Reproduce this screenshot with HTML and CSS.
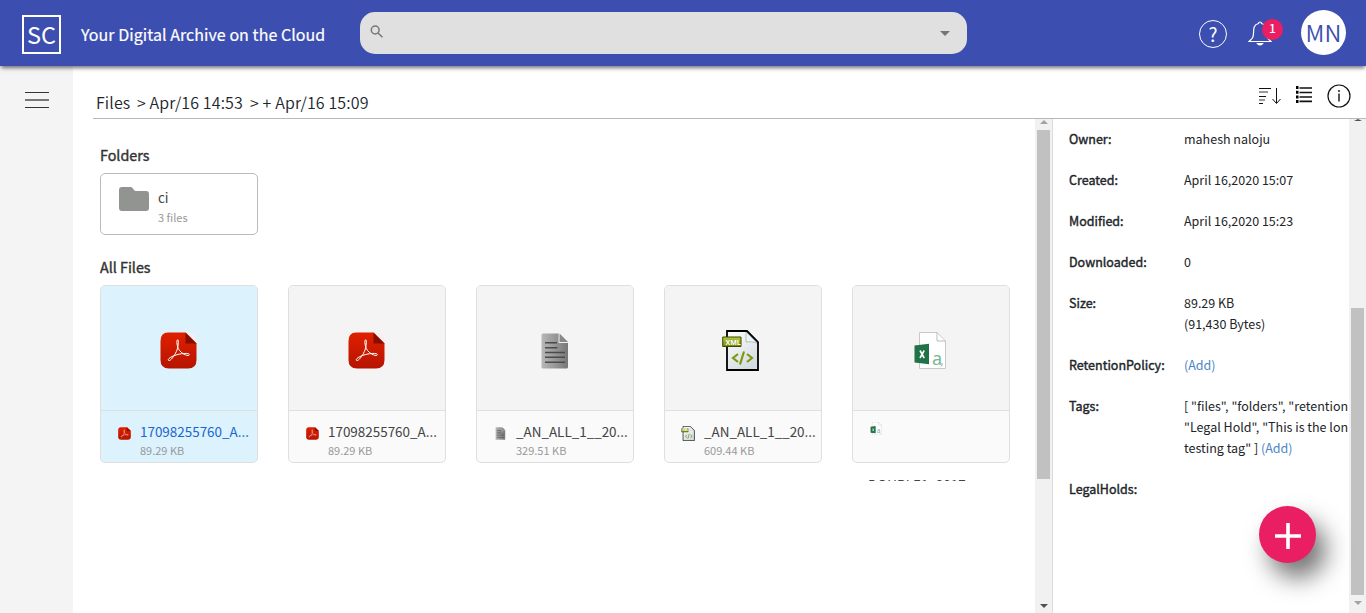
FILE: index.html
```html
<!DOCTYPE html>
<html lang="en">
<head>
<meta charset="utf-8">
<title>Digital Archive</title>
<link rel="stylesheet" href="styles.css">
</head>
<body>
<svg width="0" height="0" class="defs">
  <defs>
    <linearGradient id="red" x2="0" y2="1"><stop stop-color="#e02000"/><stop offset="1" stop-color="#b61400"/></linearGradient>
    <linearGradient id="grey"><stop stop-color="#b8b8b8"/><stop offset="1" stop-color="#777"/></linearGradient>
    <linearGradient id="paper" x2=".6" y2="1"><stop stop-color="#fff"/><stop offset="1" stop-color="#d3dce1"/></linearGradient>
    <linearGradient id="lime" x2="0" y2="1"><stop stop-color="#b9cc3c"/><stop offset="1" stop-color="#71860a"/></linearGradient>
    <symbol id="pdf" viewBox="0 0 37 37">
      <path d="M26 .5h3q7.500 1 7.500 8v3z" fill="#f9eeee"/>
      <path d="M8 .5h17.500l11 11V28q0 8.500-8.500 8.500H9Q.5 36.500.5 28V9Q.5.5 8 .5z" fill="url(#red)"/>
      <path d="M25.500.5v11h11z" fill="#850e00"/>
      <path d="M17 8.500c.3-1 1.300-1 1.300 0 .2 3-.3 6-1.300 9.500-1.500 4-5 9.500-7.500 10.500-1.500.3-1.700-1-.5-2 2-1.800 6-3.500 10-4.300 3.500-.8 7.500-1 9.500-.5 1.500.5 1 1.800-.5 1.800-3-.2-6.500-2.500-8.500-5C17.500 16 16.500 11 17 8.500z" fill="none" stroke="#fff" stroke-width="1"/>
    </symbol>
    <symbol id="txt" viewBox="0 0 28 36">
      <path d="M2 .5h16l9 9V34q0 1.500-1.500 1.500H2Q.5 35.500.5 34V2Q.5.500 2 .5z" fill="url(#grey)"/>
      <path d="M18 .5v9h9.500" fill="none" stroke="#eee"/><path d="M19 1l8 8h-8z" fill="#888"/>
      <path d="M4 9.800h12M4 14.800h12.500M4 19.500h20M4 24.200h20M4 29.200h20" stroke="#4a4a4a" stroke-width="1.500"/>
    </symbol>
    <symbol id="xml" viewBox="0 0 37 41">
      <path d="M5 1h20l11 11v28H5z" fill="url(#paper)" stroke="#000" stroke-width="1.800"/>
      <path d="M24 2v10q5-1 11 1z" fill="#eef3fa" stroke="#9aa" stroke-width=".7"/>
      <path d="M.7 7H19v9.500H.7z" fill="url(#lime)" stroke="#3d4a00" stroke-width="1"/>
      <text x="3.500" y="15" class="xml-label">XML</text>
      <path d="M16 24l-5 4 5 4M25 24l5 4-5 4M22 21.500l-4 13" fill="none" stroke="#82960f" stroke-width="2.200"/>
    </symbol>
    <symbol id="xls" viewBox="0 0 32 37">
      <path d="M5.500.5H23l8.500 8.500v27.500h-26z" fill="#fff" stroke="#c8c8c8"/>
      <path d="M23 .5V9h8.500" fill="none" stroke="#bbb"/>
      <path d="M.5 13.500L15 11.700v20.600L.5 30.500z" fill="#207346"/>
      <path d="M6 18.500l4.200 7.500M10.200 18.500L6 26" stroke="#fff" stroke-width="1.600"/>
      <text x="18" y="32.500" class="xls-a">a</text><path d="M28 31v2l-1 1.500" stroke="#78b797" fill="none"/>
    </symbol>
  </defs>
</svg>

<header class="topbar">
  <div class="logo">SC</div>
  <div class="tagline">Your Digital Archive on the Cloud</div>
  <div class="search">
    <svg class="search-icon" width="14" height="14" viewBox="0 0 14 14" fill="none" stroke="#777" stroke-width="1.500"><circle cx="5.200" cy="5" r="3.900"/><path d="M8 8l4.500 4.300"/></svg>
    <svg width="10" height="5" viewBox="0 0 10 5"><path d="M0 0h10L5 5z" fill="#757575"/></svg>
  </div>
  <div class="help">?</div>
  <div class="bell">
    <svg width="24" height="26" viewBox="0 0 24 26" fill="none" stroke="#fff" stroke-width="1.200"><path d="M10.500 2.500q0-1.500 1.500-1.500t1.500 1.500C18 3.500 18.500 7 18.500 12c0 5 1.500 5.500 4.500 8.500H1C4 17.500 5.500 17 5.500 12c0-5 .5-8.500 5-9.500z"/><path d="M9.500 22.500q2.500 3 5 0z" fill="#fff"/></svg>
    <span class="badge">1</span>
  </div>
  <div class="avatar">MN</div>
</header>

<div class="body">
  <nav class="sidebar"><div class="menu"><i></i><i></i><i></i></div></nav>
  <main class="main">
    <div class="toolbar">
      <div class="crumbs"><span class="c1">Files</span><span class="c2">&gt; Apr/16 14:53</span><span class="c3">&gt; + Apr/16 15:09</span></div>
      <svg class="sort" width="23" height="17" viewBox="0 0 23 17" fill="none" stroke="#111"><path d="M0 .5h12M0 8.500h7M0 15.500h4"/><path d="M17.500 0v15M13.500 11l4 4.500 4-4.500"/><path d="M0 4h9M0 12h6" stroke="#999" stroke-width="2"/></svg>
      <svg class="list" width="16" height="17" viewBox="0 0 16 17"><path d="M0 1.500h2.500M0 6.200h2.500M0 10.900h2.500M0 15.500h2.500" stroke="#000" stroke-width="3"/><path d="M3.500 2h12.500M3.500 6.500h12.500M3.500 11h12.500M3.500 15.400h12.500" stroke="#111" stroke-width="1.700"/></svg>
      <svg class="info" width="24" height="24" viewBox="0 0 24 24" fill="none" stroke="#111"><circle cx="12" cy="12" r="11" stroke-width="1.200"/><path d="M12 9.500v8M12 6v2" stroke-width="1.400"/></svg>
    </div>
    <div class="split">
      <section class="files">
        <h2>Folders</h2>
        <div class="folder">
          <svg width="30" height="24" viewBox="0 0 30 24"><path d="M3 0h9.500l3.500 4h11q3 0 3 3v14q0 3-3 3H3q-3 0-3-3V3q0-3 3-3z" fill="#929492"/></svg>
          <div><div class="name">ci</div><div class="size">3 files</div></div>
        </div>
        <h2 class="all">All Files</h2>
        <div class="grid">
          <article class="card selected"><div class="preview"><svg width="37" height="37"><use href="#pdf"/></svg></div><div class="meta"><svg class="mini" width="13" height="13"><use href="#pdf"/></svg><div><div class="name">17098255760_A...</div><div class="size">89.29 KB</div></div></div></article>
          <article class="card"><div class="preview"><svg width="37" height="37"><use href="#pdf"/></svg></div><div class="meta"><svg class="mini" width="13" height="13"><use href="#pdf"/></svg><div><div class="name">17098255760_A...</div><div class="size">89.29 KB</div></div></div></article>
          <article class="card"><div class="preview"><svg width="28" height="36"><use href="#txt"/></svg></div><div class="meta"><svg class="mini" width="13" height="13"><use href="#txt"/></svg><div><div class="name">_AN_ALL_1__20...</div><div class="size">329.51 KB</div></div></div></article>
          <article class="card xml"><div class="preview"><svg width="37" height="41"><use href="#xml"/></svg></div><div class="meta"><svg class="mini" width="14" height="15"><use href="#xml"/></svg><div><div class="name">_AN_ALL_1__20...</div><div class="size">609.44 KB</div></div></div></article>
          <article class="card wrapped"><div class="preview"><svg width="32" height="37"><use href="#xls"/></svg></div><div class="meta"><svg class="mini" width="12" height="13"><use href="#xls"/></svg><div class="name long">DOUBLE1_2017</div></div></article>
        </div>
      </section>
      <div class="bar mid"><i class="up"></i><b></b><i class="down"></i></div>
      <aside class="details">
        <dl>
          <dt>Owner:</dt><dd>mahesh naloju</dd>
          <dt>Created:</dt><dd>April 16,2020 15:07</dd>
          <dt>Modified:</dt><dd>April 16,2020 15:23</dd>
          <dt>Downloaded:</dt><dd>0</dd>
          <dt>Size:</dt><dd>89.29 KB<br>(91,430 Bytes)</dd>
          <dt>RetentionPolicy:</dt><dd><a>(Add)</a></dd>
          <dt>Tags:</dt><dd>[ "files", "folders", "retention<br>"Legal Hold", "This is the lon<br>testing tag" ] <a>(Add)</a></dd>
          <dt>LegalHolds:</dt><dd></dd>
        </dl>
      </aside>
      <div class="bar right"><i class="up"></i><b></b><i class="down"></i></div>
    </div>
  </main>
</div>
<button class="fab" aria-label="Add"><svg width="26" height="26" viewBox="0 0 26 26"><path d="M13 0v26M0 13h26" stroke="#fff" stroke-width="3.600"/></svg></button>
</body>
</html>
```
FILE: styles.css
```css
* { box-sizing: border-box; }
body { margin: 0; height: 613px; overflow: hidden; display: flex; flex-direction: column; background: #fff; color: #212529; font-family: "Noto Sans CJK JP", "Noto Sans CJK SC", "Noto Sans", sans-serif; font-size: 13px; }
.defs { position: absolute; }
.topbar { height: 66px; flex: none; display: flex; align-items: flex-start; background: #3c4eaf; color: #fff; box-shadow: 0 3px 4px -1px rgba(0,0,0,.55); z-index: 2; }
.logo { width: 39px; height: 39px; margin: 15px 0 0 22px; border: 2px solid #fff; font-size: 23.500px; line-height: 34px; display: flex; justify-content: center; }
.tagline { width: 299px; padding-left: 20px; margin-top: 22px; font-size: 16px; line-height: 24px; letter-spacing: .05px; white-space: nowrap; -webkit-text-stroke: .2px; }
.search { width: 607px; height: 42px; margin-top: 12px; border-radius: 15px; background: #e0e0e0; display: flex; justify-content: space-between; align-items: center; padding: 0 17px 0 10px; }
.search-icon { margin-bottom: 3px; }
.help { width: 28px; height: 28px; margin: 20px 0 0 232px; border: 1.3px solid #fff; border-radius: 50%; text-align: center; font-size: 19px; line-height: 25px; }
.bell { position: relative; margin: 21px 0 0 21px; width: 24px; }
.badge { position: absolute; left: 14px; top: -2px; width: 21px; height: 21px; border-radius: 50%; background: #e91e63; font-size: 12px; font-weight: 500; line-height: 17px; text-align: center; }
.avatar { width: 45px; height: 45px; margin: 10px 0 0 29px; border-radius: 50%; background: #fff; color: #3c4eaf; font-size: 23.500px; font-weight: 350; line-height: 45px; text-align: center; }
.body { display: flex; flex: 1; min-height: 0; }
.sidebar { width: 73px; background: #f4f4f4; padding: 26px 0 0 25px; }
.menu { width: 24px; height: 16px; display: flex; flex-direction: column; justify-content: space-between; }
.menu i { height: 1px; background: #333; }
.menu i:nth-child(2) { height: 2px; background: #777; }
.main { flex: 1; min-width: 0; padding-left: 20px; display: flex; flex-direction: column; }
.toolbar { height: 53px; flex: none; border-bottom: 1px solid #b8b8b8; display: flex; align-items: flex-start; }
.crumbs { display: flex; width: 1166px; padding: 24px 0 0 3px; font-size: 16px; line-height: 24px; letter-spacing: .13px; white-space: pre; font-weight: 350; }
.c1 { width: 41px; } .c2 { width: 113px; }
.sort { margin-top: 22px; }
.list { margin: 20px 0 0 14px; }
.info { margin: 18px 0 0 15px; }
.split { display: flex; flex: 1; min-height: 0; }
.files { width: 942px; padding: 26px 0 0 7px; }
h2 { margin: 0; font-size: 14.300px; line-height: 20px; font-weight: 400; color: #333; -webkit-text-stroke: .4px; }
.folder { width: 158px; height: 62px; margin-top: 8px; border: 1px solid #bbb; border-radius: 5px; display: flex; gap: 9px; padding: 13px 0 0 18px; }
.name { font-size: 13.450px; line-height: 18px; height: 20px; color: #444; white-space: nowrap; }
.folder .name { padding-top: 1px; height: 22px; }
.size { font-size: 11px; line-height: 17px; color: #999; white-space: nowrap; }
.all { margin-top: 22px; }
.grid { display: flex; gap: 30px; height: 204px; padding-top: 8px; overflow: hidden; }
.card { flex: none; width: 158px; height: 178px; border: 1px solid #dfdfdf; border-radius: 5px; background: #fafafa; }
.preview { height: 125px; border-bottom: 1px solid #dfdfdf; background: #f4f4f4; border-radius: 4px 4px 0 0; display: flex; align-items: center; justify-content: center; padding: 5px 1px 0 0; }
.xml .preview { padding-right: 5px; }
.wrapped .preview { padding-right: 2px; }
.selected, .selected .preview { background: #dcf2fd; }
.selected .name { color: #1a66d0; }
.meta { display: flex; gap: 9px; padding: 11px 0 0 17px; }
.mini { flex: none; margin-top: 5px; }
.xml .meta { padding-left: 16px; }
.xml .mini { margin-top: 4px; }
.wrapped .meta { flex-direction: column; gap: 0; }
.wrapped .mini { margin: 0; }
.long { margin: 40px 0 0 -2px; }
.xml-label { font: 700 7px "Open Sans", sans-serif; fill: #fff; }
.xls-a { font: 18px "Noto Sans", sans-serif; fill: #78b797; }
.bar { width: 17px; flex: none; background: #f1f1f1; display: flex; flex-direction: column; align-items: center; }
.bar b { width: 13px; background: #c1c1c1; }
.bar i { border: 4px solid transparent; border-top: 0; border-bottom: 4px solid #a3a3a3; }
.bar .down { border-top: 4px solid #505050; border-bottom: 0; margin-top: auto; }
.mid b { height: 349px; margin-top: 6px; }
.mid .up { margin-top: 1px; } .mid .down { margin-bottom: 5px; }
.right .up { border-width: 0 4px 2px; border-bottom-color: #505050; }
.right b { height: 287px; margin-top: 187px; }
.right .down { border-top-color: #a3a3a3; margin-bottom: 8px; }
.details { width: 297px; overflow: hidden; border-left: 1px solid #ddd; padding: 9px 0 0 16px; }
dl { margin: 0; display: grid; grid-template-columns: 115px 1fr; row-gap: 20px; line-height: 21px; font-size: 12.500px; white-space: nowrap; }
dt { -webkit-text-stroke: .4px; }
dd { margin: 0; }
dd a { color: #4c86c6; }
.fab { position: fixed; left: 1259px; top: 506px; width: 57px; height: 57px; border: 0; border-radius: 50%; background: #e91e63; display: flex; align-items: center; justify-content: center; padding: 2px 0 0 1px; box-shadow: 10px 15px 24px rgba(0,0,0,.55); z-index: 3; }
```
